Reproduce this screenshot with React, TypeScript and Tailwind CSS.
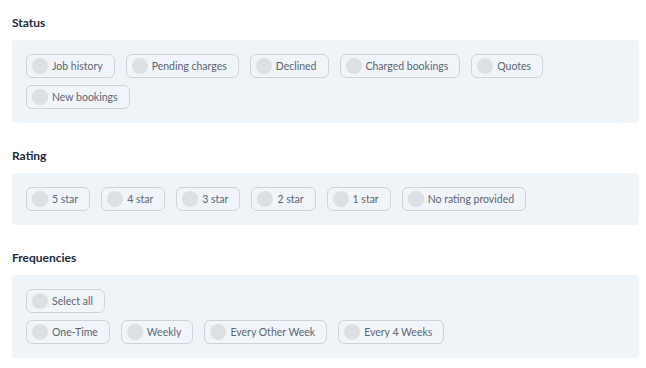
import React from "react";

const sections: { title: string; rows: string[][] }[] = [
  {
    title: "Status",
    rows: [
      ["Job history", "Pending charges", "Declined", "Charged bookings", "Quotes"],
      ["New bookings"],
    ],
  },
  {
    title: "Rating",
    rows: [["5 star", "4 star", "3 star", "2 star", "1 star", "No rating provided"]],
  },
  {
    title: "Frequencies",
    rows: [["Select all"], ["One-Time", "Weekly", "Every Other Week", "Every 4 Weeks"]],
  },
];

function Chip({ label }: { label: string }) {
  return (
    <div className="flex items-center h-[24px] pl-[5px] pr-[11px] gap-[4px] rounded-[6px] border border-[#cdd3da] bg-[#f1f5f9]">
      <span className="w-[16px] h-[16px] rounded-full bg-[#dcdfe3]" />
      <span className="text-[10.5px] leading-none text-[#5b6573]">{label}</span>
    </div>
  );
}

export default function App() {
  return (
    <div
      className="w-[646px] h-[368px] bg-white px-[12px] pt-[13px] flex flex-col"
      style={{ fontFamily: "Lato, 'Noto Sans', sans-serif" }}
    >
      {sections.map((s, i) => (
        <div key={s.title} className={i > 0 ? "mt-[23px]" : ""}>
          <div className="h-[19px] flex items-center text-[12px] font-bold text-[#1c2939]">{s.title}</div>
          <div className="mt-[8px] w-[627px] rounded-[4px] bg-[#eff4f8] px-[14px] py-[14px] flex flex-col gap-[7px]">
            {s.rows.map((row, j) => (
              <div key={j} className="flex gap-[11px]">
                {row.map((l) => (
                  <Chip key={l} label={l} />
                ))}
              </div>
            ))}
          </div>
        </div>
      ))}
    </div>
  );
}
